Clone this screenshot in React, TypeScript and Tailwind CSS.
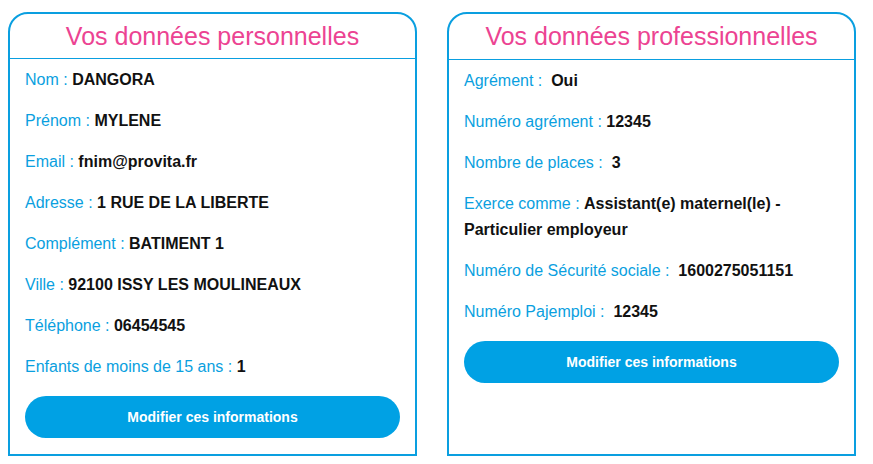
const perso: [string, string][] = [
  ["Nom :", "DANGORA"],
  ["Prénom :", "MYLENE"],
  ["Email :", "fnim@provita.fr"],
  ["Adresse :", "1 RUE DE LA LIBERTE"],
  ["Complément :", "BATIMENT 1"],
  ["Ville :", "92100 ISSY LES MOULINEAUX"],
  ["Téléphone :", "06454545"],
  ["Enfants de moins de 15 ans :", "1"],
];

const pro: [string, string][] = [
  ["Agrément :\u00a0", "Oui"],
  ["Numéro agrément :", "12345"],
  ["Nombre de places :\u00a0", "3"],
  ["Exerce comme :", "Assistant(e) maternel(le) - Particulier employeur"],
  ["Numéro de Sécurité sociale :\u00a0", "1600275051151"],
  ["Numéro Pajemploi :\u00a0", "12345"],
];

function Card({ title, rows }: { title: string; rows: [string, string][] }) {
  return (
    <div className="w-[409px] border-2 border-[#0a9fe0] rounded-t-[20px] flex flex-col">
      {/* Header */}
      <div className="h-[46px] border-b border-[#0a9fe0] flex items-center justify-center">
        <h2 className="text-[25px] text-[#ec4392] leading-none">{title}</h2>
      </div>

      {/* Rows */}
      <div className="px-[15px] pt-[8px] pb-[16px] flex flex-col">
        <div className="flex flex-col gap-[15px]">
          {rows.map(([label, value]) => (
            <p key={label} className="text-[16px] leading-[26px] pr-[10px]">
              <span className="text-[#0a9fe0]">{label}</span>{" "}
              <span className="font-bold text-[#111]">{value}</span>
            </p>
          ))}
        </div>
        <button className="mt-[16px] h-[42px] w-full rounded-full bg-[#00a1e4] text-white font-bold text-[14px]">
          Modifier ces informations
        </button>
      </div>
    </div>
  );
}

export default function App() {
  return (
    <div
      className="w-[873px] h-[464px] bg-white flex items-stretch gap-[30px] pl-[8px] pt-[12px] pb-[8px]"
      style={{ fontFamily: '"Liberation Sans", Arial, sans-serif' }}
    >
      <Card title="Vos données personnelles" rows={perso} />
      <Card title="Vos données professionnelles" rows={pro} />
    </div>
  );
}
